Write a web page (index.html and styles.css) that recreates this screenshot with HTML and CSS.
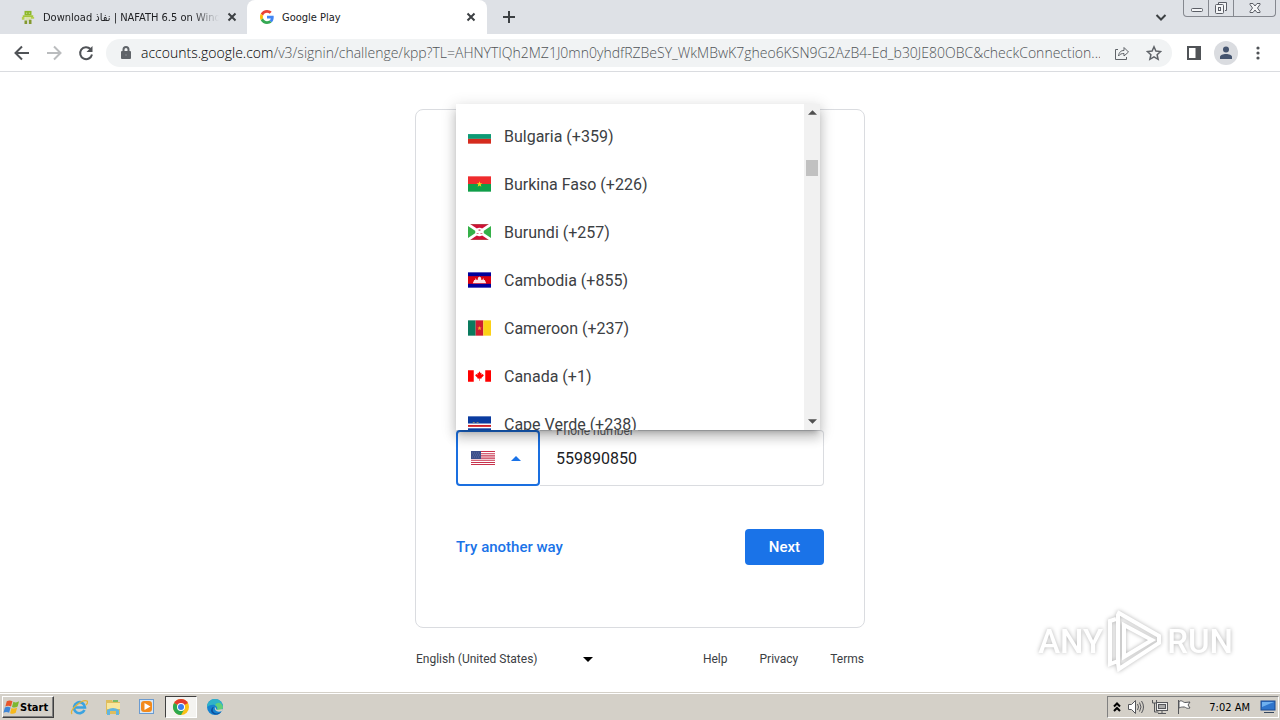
FILE: index.html
```html
<!DOCTYPE html>
<html lang="en">
<head>
    <meta charset="UTF-8">
    <meta name="viewport" content="width=device-width, initial-scale=1.0">
    <title>Google Play</title>
    <link rel="stylesheet" href="styles.css">
</head>
<body>
    <header class="browser">
        <div class="tab-strip">
            <div class="tab">
                <svg class="favicon" viewBox="0 0 16 16">
                    <path d="M4 1h8v5H4z" fill="#8cb82b" />
                    <path d="M2 6h12v2H2z" fill="#a4c639" />
                    <path d="M1 8h3v3H1zM11 8h4v2h-4z" fill="#b5cf4c" />
                    <path d="M5 8h6v4H5z" fill="#d9e3a8" />
                    <path d="M4 12h3v4H4zM9 11h3v5H9z" fill="#83992f" />
                    <path d="M6 3h1v1H6zM9 3h1v1H9z" fill="#fff" />
                </svg>
                <span class="tab-title tab-title-faded">Download نفاذ | NAFATH 6.5 on Windows</span>
                <button class="tab-close" aria-label="Close tab">
                    <svg viewBox="0 0 10 10"><path d="M1.500 1.500l7 7M8.500 1.500l-7 7" /></svg>
                </button>
            </div>
            <div class="tab active">
                <svg class="favicon" viewBox="0 0 48 48">
                    <path fill="#EA4335" d="M24 9.500c3.540 0 6.710 1.220 9.210 3.600l6.850-6.850C35.900 2.380 30.470 0 24 0 14.620 0 6.510 5.380 2.560 13.220l7.980 6.190C12.430 13.720 17.740 9.500 24 9.500z" />
                    <path fill="#4285F4" d="M46.980 24.550c0-1.570-.15-3.090-.38-4.550H24v9.020h12.940c-.58 2.960-2.260 5.480-4.780 7.180l7.730 6c4.510-4.180 7.090-10.360 7.090-17.650z" />
                    <path fill="#FBBC05" d="M10.530 28.590c-.48-1.450-.76-2.990-.76-4.590s.27-3.140.76-4.590l-7.980-6.190C.92 16.460 0 20.120 0 24c0 3.880.92 7.540 2.560 10.780l7.970-6.190z" />
                    <path fill="#34A853" d="M24 48c6.480 0 11.930-2.130 15.890-5.810l-7.730-6c-2.150 1.450-4.920 2.300-8.160 2.300-6.260 0-11.570-4.220-13.470-9.910l-7.980 6.190C6.510 42.620 14.620 48 24 48z" />
                </svg>
                <span class="tab-title">Google Play</span>
                <button class="tab-close" aria-label="Close tab">
                    <svg viewBox="0 0 10 10"><path d="M1.500 1.500l7 7M8.500 1.500l-7 7" /></svg>
                </button>
            </div>
            <button class="new-tab" aria-label="New tab">
                <svg viewBox="0 0 12 12"><path d="M6 0v12M0 6h12" /></svg>
            </button>
            <button class="tab-search" aria-label="Search tabs">
                <svg viewBox="0 0 12 12"><path d="M1.500 4L6 8.500 10.500 4" /></svg>
            </button>
            <div class="window-controls">
                <button aria-label="Minimize">
                    <svg viewBox="0 0 26 16"><rect x="7.500" y="8.500" width="11" height="3" rx="1" /></svg>
                </button>
                <button aria-label="Restore">
                    <svg viewBox="0 0 26 16"><path d="M9.500 4V2.500h8v8H16" /><rect x="6.500" y="4.500" width="8" height="9" rx="1" /><rect x="9.500" y="7.500" width="2" height="3" /></svg>
                </button>
                <button class="close" aria-label="Close">
                    <svg viewBox="0 0 26 16"><path d="M8 3.500h3l2 2.500 2-2.500h3v1L15.500 8l2.500 3.500v1h-3L13 10l-2 2.500H8v-1L10.500 8 8 4.500z" /></svg>
                </button>
            </div>
        </div>

        <div class="toolbar">
            <button class="tool" aria-label="Back">
                <svg viewBox="0 0 16 16"><path d="M15 8H2M8 1.500L1.500 8 8 14.500" /></svg>
            </button>
            <button class="tool disabled" aria-label="Forward">
                <svg viewBox="0 0 16 16"><path d="M1 8h13M8 1.500L14.500 8 8 14.500" /></svg>
            </button>
            <button class="tool" aria-label="Reload">
                <svg viewBox="0 0 16 16"><path d="M14 9.500A6 6 0 1 1 12.500 4" /><path class="solid" d="M14.500 1v6h-6z" /></svg>
            </button>
            <div class="omnibox">
                <svg class="lock" viewBox="0 0 10 14"><path d="M2.500 6V3.500a2.500 2.500 0 0 1 5 0V6" /><rect x="0" y="5" width="10" height="8" rx="1" /><circle cx="5" cy="9" r="1" /></svg>
                <div class="url" role="textbox" aria-label="Address"><span>accounts.google.com</span>/v3/signin/challenge/kpp?TL=AHNYTIQh2MZ1J0mn0yhdfRZBeSY_WkMBwK7gheo6KSN9G2AzB4-Ed_b30JE80OBC&amp;checkConnection...</div>
                <button class="omni-button" aria-label="Share">
                    <svg viewBox="0 0 16 16"><path d="M4 4.500H1.500v10h11V12M4.500 11c.5-4 2.500-5.500 5.500-5.500v-3L14.500 7 10 11V8.500c-2.500 0-4 .5-5.500 2.500z" /></svg>
                </button>
                <button class="omni-button" aria-label="Bookmark">
                    <svg viewBox="0 0 16 16"><path class="star" d="M8 1.800l1.900 4.300 4.700.5-3.500 3.100 1 4.600L8 11.900l-4.100 2.400 1-4.600-3.500-3.100 4.700-.5z" /></svg>
                </button>
            </div>
            <button class="tool" aria-label="Side panel">
                <svg viewBox="0 0 16 16"><rect x="2" y="2" width="12" height="12" /><path class="solid" d="M9.500 2H14v12H9.500z" /></svg>
            </button>
            <button class="tool profile" aria-label="Profile">
                <svg viewBox="0 0 22 22"><circle cx="11" cy="7.500" r="3" /><path d="M5 17v-2c0-4 12-4 12 0v2z" /></svg>
            </button>
            <button class="tool" aria-label="Menu">
                <svg viewBox="0 0 16 16"><circle class="dot" cx="8" cy="3" r="1.600" /><circle class="dot" cx="8" cy="8" r="1.600" /><circle class="dot" cx="8" cy="13" r="1.600" /></svg>
            </button>
        </div>
    </header>

    <main class="page">
        <form class="card">
            <div class="phone-row">
                <button type="button" class="country-button" aria-haspopup="listbox" aria-label="United States (+1)">
                    <svg class="flag-us" viewBox="0 0 24 14">
                        <rect width="24" height="14" fill="#fff" />
                        <path d="M0 .5h24M0 2.700h24M0 4.900h24M0 7.100h24M0 9.300h24M0 11.500h24M0 13.500h24" stroke="#c8324c" stroke-width="1.100" />
                        <rect width="10" height="8" fill="#3c4f8a" />
                        <path d="M1 2h8M2 4h7M1 6h8" stroke="#7785b0" stroke-width=".6" stroke-dasharray="1 1" />
                    </svg>
                    <svg class="caret" viewBox="0 0 10 5"><path d="M0 5l5-5 5 5z" /></svg>
                </button>
                <div class="phone-field">
                    <label for="phone">Phone number</label>
                    <input type="tel" id="phone" value="559890850">
                </div>

                <div class="menu">
                    <ul class="menu-list" role="listbox" aria-label="Country">
                        <li role="option">
                            <svg class="flag" viewBox="0 0 24 16"><path d="M0 0h24v6H0z" fill="#fff" /><path d="M0 6h24v5H0z" fill="#0c9b75" /><path d="M0 11h24v5H0z" fill="#d52b1e" /></svg>
                            Bulgaria (+359)
                        </li>
                        <li role="option">
                            <svg class="flag" viewBox="0 0 24 16"><path d="M0 0h24v8H0z" fill="#ef2b2d" /><path d="M0 8h24v8H0z" fill="#109e49" /><path d="M12 5l.8 2.200H15l-1.800 1.400.7 2.200-1.900-1.300-1.900 1.300.7-2.200L9 7.200h2.200z" fill="#fcd116" /></svg>
                            Burkina Faso (+226)
                        </li>
                        <li role="option">
                            <svg class="flag" viewBox="0 0 24 16"><path d="M0 0h24v16H0z" fill="#35b048" /><path d="M0 0h24L12 8l12 8H0l12-8z" fill="#cf1136" /><path d="M0 0l24 16M24 0L0 16" stroke="#fff" stroke-width="3" /><circle cx="12" cy="8" r="4.500" fill="#fff" /><path d="M11 5h2v2h-2zM9 9h2v1H9zM13 9h2v1h-2z" fill="#d9788a" /></svg>
                            Burundi (+257)
                        </li>
                        <li role="option">
                            <svg class="flag" viewBox="0 0 24 16"><path d="M0 0h24v16H0z" fill="#00009c" /><path d="M0 4h24v8H0z" fill="#d90010" /><path d="M5 11.500L6.500 8h1l.5-2 1 2h1l.5-3h1l.5-1 .5 1h1l.5 3h1l1-2 .5 2h1l1.500 3.500z" fill="#fff" opacity=".9" /></svg>
                            Cambodia (+855)
                        </li>
                        <li role="option">
                            <svg class="flag" viewBox="0 0 24 16"><path d="M0 0h8v16H0z" fill="#0a7a5e" /><path d="M8 0h8v16H8z" fill="#ce1b30" /><path d="M16 0h8v16h-8z" fill="#fcd116" /><path d="M12 6l.6 1.500h1.600L13 8.500l.5 1.700-1.500-1-1.500 1 .5-1.700-1.200-1h1.600z" fill="#f6a52a" /></svg>
                            Cameroon (+237)
                        </li>
                        <li role="option">
                            <svg class="flag" viewBox="0 0 24 16"><path d="M0 2h24v12H0z" fill="#fff" /><path d="M0 2h6v12H0zM18 2h6v12h-6z" fill="#f00" /><path d="M12 3l1.200 2 1-.4-.3 2.200L15.500 6l1 1.500-2.600 2.500.2.900-1.800-.2V13h-.6v-2.300l-1.800.2.200-.9-2.600-2.500 1-1.500 1.600.8-.3-2.200 1 .4z" fill="#f00" /></svg>
                            Canada (+1)
                        </li>
                        <li role="option">
                            <svg class="flag" viewBox="0 0 24 16"><path d="M0 0h24v16H0z" fill="#0a3ba0" /><path d="M0 7.500h24v5H0z" fill="#fff" /><path d="M0 9h24v2H0z" fill="#cf2027" /><path d="M5 6.500h2M9 6.500h2" stroke="#c9b458" stroke-width=".7" /></svg>
                            Cape Verde (+238)
                        </li>
                    </ul>
                    <div class="scrollbar" aria-hidden="true">
                        <svg viewBox="0 0 10 5"><path d="M0 5l5-5 5 5z" /></svg>
                        <div class="scroll-track"><div class="scroll-thumb"></div></div>
                        <svg viewBox="0 0 10 5"><path d="M0 0l5 5 5-5z" /></svg>
                    </div>
                </div>
            </div>

            <div class="actions">
                <a href="#">Try another way</a>
                <button type="button" class="next">Next</button>
            </div>
        </form>

        <footer class="page-footer">
            <div class="language">
                <select aria-label="Language">
                    <option>English (United States)</option>
                </select>
                <svg viewBox="0 0 10 5"><path d="M0 0l5 5 5-5z" /></svg>
            </div>
            <nav>
                <a href="#">Help</a>
                <a href="#">Privacy</a>
                <a href="#">Terms</a>
            </nav>
        </footer>
    </main>

    <div class="watermark">
        <span>ANY</span>
        <svg viewBox="0 0 56 62">
            <path d="M9 9L3 11v43l8-3M12 3l40 23v7L12 59l-1-6V5zM17 15v32l28-17z" />
        </svg>
        <span>RUN</span>
    </div>

    <div class="taskbar">
        <button class="start">
            <svg viewBox="0 0 18 16">
                <path d="M4 2q3-2 6 0L8.500 7.500q-3-1.500-6 0z" fill="#e8562a" />
                <path d="M11 2.500q3 1.500 6-.5l-1.500 5.500q-3 2-6 .5z" fill="#7db72f" />
                <path d="M2 8.500q3-1.500 6 0L6.500 14q-3-1.500-6 0z" fill="#3f86d6" />
                <path d="M9 9q3 1.500 6-.5L13.500 14q-3 2-6 .5z" fill="#f6b91c" />
            </svg>
            Start
        </button>
        <div class="quick-launch">
            <button aria-label="Internet Explorer">
                <svg viewBox="0 0 18 18">
                    <path d="M14.500 12A5.500 5.500 0 1 1 15 9.500H5" fill="none" stroke="#3ba3e0" stroke-width="2.600" />
                    <path d="M2 16C-1 12 12 1 17 3c1 1 0 3-1 4" fill="none" stroke="#e3b437" stroke-width="1.300" />
                </svg>
            </button>
            <button aria-label="Explorer">
                <svg viewBox="0 0 18 18">
                    <path d="M2 2h6l1 2h7v12H2z" fill="#dfbd5c" />
                    <path d="M3 5h13v6H3z" fill="#f8e69c" />
                    <path d="M3 17v-5q6-4 12 0v5h-3v-4H6v4z" fill="#62b5df" />
                    <path d="M9 2h5v2H9z" fill="#77bb67" />
                </svg>
            </button>
            <button aria-label="Media Player">
                <svg viewBox="0 0 18 18">
                    <rect x="1.500" y="1.500" width="14" height="14" fill="#d7e8f8" stroke="#6b9bd0" />
                    <rect x="3" y="3" width="11" height="11" rx="3" fill="#f28a1c" />
                    <path d="M6.500 5l6 3.500-6 3.500z" fill="#fff" />
                </svg>
            </button>
            <button class="pressed" aria-label="Chrome">
                <svg viewBox="0 0 18 18">
                    <circle cx="9" cy="9" r="8" fill="#fbc116" />
                    <path d="M9 9L2.070 5A8 8 0 0 1 15.930 5z" fill="#e33b2e" />
                    <path d="M9 9L2.070 5A8 8 0 0 0 9 17l3.500-6z" fill="#2da94f" />
                    <circle cx="9" cy="9" r="4" fill="#fff" />
                    <circle cx="9" cy="9" r="3" fill="#3b7ded" />
                </svg>
            </button>
            <button aria-label="Edge">
                <svg viewBox="0 0 18 18">
                    <circle cx="9" cy="9" r="8" fill="#1683d0" />
                    <path d="M1 9a8 8 0 0 1 16 0c0 3-4 4-6 3 2-4-4-8-10-3z" fill="#2fb3c8" />
                    <path d="M17 9c0 3-4 4-6 3 1-2 0-4-2-5 3-4 7-2 8 2z" fill="#61cf7a" />
                    <path d="M8 9c-3 3 0 8 5 6l2-1c-3 4-9 3-10-1 0-2 1-4 3-4z" fill="#0d4f9e" />
                    <path d="M9 9c-1 3 2 6 7 4l1-2-6 1c-1-1-1-2-2-3z" fill="#d4d0c8" />
                </svg>
            </button>
        </div>
        <div class="tray">
            <svg class="chevrons" viewBox="0 0 8 10"><path d="M1 4.500l3-3 3 3M1 9l3-3 3 3" /></svg>
            <svg viewBox="0 0 18 16"><path d="M1.500 5.500h3l4-4v13l-4-4h-3z" fill="#fff" /><path d="M10.500 5q2 3 0 6M12.500 3.500q3 4.500 0 9M14.500 2q4 6 0 12" /></svg>
            <svg viewBox="0 0 18 16"><rect x="5.500" y="3.500" width="11" height="8" fill="#eee" /><path d="M7 14.500h8M11 12v2M1.500 1v3h4V1M3.500 4v9h4" /><rect x="7.500" y="5.500" width="7" height="4" fill="#aaa" /></svg>
            <svg viewBox="0 0 18 16"><path d="M3.500 1v14" /><path d="M4 2.500c3-2 4 1 6 1l5-.5-2 3 2 3c-4 1-4-1-6-1s-3 0-5 1z" fill="#fff" /></svg>
            <time>7:02 AM</time>
            <svg class="desktop" viewBox="0 0 16 16"><rect x="1" y="2" width="14" height="9" fill="#2f75cc" stroke="#1c4b91" /><path d="M2 3h12L2 8z" fill="#6fb0ef" stroke="none" /><path d="M4 13.500h10" stroke="#34465e" /></svg>
        </div>
    </div>
</body>
</html>
```
FILE: styles.css
```css
* {
    box-sizing: border-box;
}
body {
    margin: 0;
    min-height: 100vh;
    display: flex;
    flex-direction: column;
    position: relative;
    font-family: Roboto, Arial, sans-serif;
    color: #202124;
    background-color: #fff;
}
button {
    padding: 0;
    border: none;
    background: none;
    font-family: inherit;
    color: inherit;
    cursor: pointer;
}
svg {
    display: block;
    flex: none;
}
a {
    text-decoration: none;
}

/* browser window */
.tab-strip {
    display: flex;
    align-items: center;
    height: 34px;
    background-color: #dee1e6;
    font-family: "DejaVu Sans Condensed", Tahoma, sans-serif;
    font-size: 11px;
}
.tab {
    display: flex;
    align-items: center;
    gap: 8px;
    width: 240px;
    height: 34px;
    padding: 0 11px 0 13px;
}
.tab:first-child {
    width: 247px;
    padding: 0 10px 0 21px;
}
.tab.active {
    background-color: #fff;
    border-radius: 8px 8px 0 0;
}
.favicon {
    width: 14px;
    height: 14px;
}
.tab-title {
    flex: 1;
    overflow: hidden;
    white-space: nowrap;
}
.tab-title-faded {
    -webkit-mask-image: linear-gradient(to right, #000 85%, transparent);
    mask-image: linear-gradient(to right, #000 85%, transparent);
}
.tab-close svg {
    width: 10px;
    height: 10px;
}
.tab-close svg, .new-tab svg, .tab-search svg {
    fill: none;
    stroke: #3c4043;
    stroke-width: 2;
}
.new-tab {
    margin-left: 16px;
}
.new-tab svg, .tab-search svg {
    width: 12px;
    height: 12px;
}
.tab-search {
    margin-left: auto;
}
.window-controls {
    display: flex;
    align-self: flex-start;
    height: 17px;
    margin: 0 4px 0 16px;
    border: 1px solid #85888f;
    border-top: none;
    border-radius: 0 0 4px 4px;
}
.window-controls button {
    width: 25px;
    border-right: 1px solid #85888f;
}
.window-controls .close {
    width: 41px;
    border-right: none;
}
.window-controls svg {
    width: 26px;
    height: 16px;
    margin: 0 auto;
    fill: #f4f5f7;
    stroke: #5b5e66;
}
.toolbar {
    display: flex;
    align-items: center;
    gap: 8px;
    height: 38px;
    padding: 0 10px;
    border-bottom: 1px solid #dadce0;
}
.tool {
    display: flex;
    align-items: center;
    justify-content: center;
    width: 24px;
    height: 24px;
}
.tool svg {
    width: 16px;
    height: 16px;
    fill: none;
    stroke: #505357;
    stroke-width: 2;
}
.tool .solid, .tool .dot {
    fill: #505357;
    stroke: none;
}
.tool.disabled svg {
    stroke: #babcbe;
}
.profile {
    border-radius: 50%;
    background-color: #dadce0;
}
.profile svg {
    width: 22px;
    height: 22px;
    fill: #44546f;
    stroke: none;
}
.omnibox {
    flex: 1;
    display: flex;
    align-items: center;
    min-width: 0;
    height: 28px;
    margin-right: 2px;
    padding: 0 10px 0 15px;
    border-radius: 14px;
    background-color: #f1f3f4;
}
.lock {
    width: 10px;
    height: 14px;
    margin-right: 10px;
    fill: #5f6368;
}
.lock path {
    fill: none;
    stroke: #5f6368;
    stroke-width: 2;
}
.lock circle {
    fill: #777b80;
}
.url {
    flex: 1;
    overflow: hidden;
    white-space: nowrap;
    font-family: "Open Sans", Tahoma, sans-serif;
    font-size: 14px;
    font-weight: 300;
    color: #505357;
}
.url span {
    color: #000;
}
.omni-button {
    margin-left: 14px;
}
.omni-button + .omni-button {
    margin-left: 16px;
}
.omni-button svg {
    width: 16px;
    height: 16px;
    fill: none;
    stroke: #5f6368;
}
.omni-button .star {
    stroke-width: 1.5;
}

/* sign-in page */
.page {
    flex: 1;
    padding-top: 37px;
}
.card {
    display: flex;
    flex-direction: column;
    justify-content: flex-end;
    max-width: 450px;
    min-height: 519px;
    margin: 0 auto;
    padding: 0 40px 62px;
    border: 1px solid #dadce0;
    border-radius: 8px;
}
.phone-row {
    display: flex;
    position: relative;
    height: 56px;
}
.country-button {
    display: flex;
    align-items: center;
    gap: 16px;
    width: 84px;
    padding-left: 13px;
    border: 2px solid #1a6fe0;
    border-radius: 4px;
}
.flag-us {
    width: 24px;
    height: 14px;
}
.caret {
    width: 10px;
    height: 5px;
    fill: #1a73e8;
}
.phone-field {
    flex: 1;
    position: relative;
}
.phone-field label {
    position: absolute;
    top: -7px;
    left: 12px;
    padding: 0 4px;
    background-color: #fff;
    font-size: 12px;
    line-height: 16px;
    color: #5f6368;
}
.phone-field input {
    width: 100%;
    height: 56px;
    padding: 0 16px;
    border: 1px solid #dadce0;
    border-left: none;
    border-radius: 0 4px 4px 0;
    outline: none;
    font-family: inherit;
    font-size: 16px;
    color: #202124;
}
.menu {
    display: flex;
    position: absolute;
    bottom: 100%;
    left: 0;
    right: 4px;
    height: 326px;
    background-color: #fff;
    box-shadow: 0 5px 5px -3px rgba(0, 0, 0, 0.2), 0 8px 10px 1px rgba(0, 0, 0, 0.14), 0 3px 14px 2px rgba(0, 0, 0, 0.12);
}
.menu-list {
    flex: 1;
    margin: 0;
    padding: 8px 0;
    overflow: hidden;
    list-style-type: none;
}
.menu-list li {
    display: flex;
    align-items: center;
    gap: 13px;
    height: 48px;
    padding-left: 12px;
    font-size: 16px;
    color: #3c4043;
}
.flag {
    width: 23px;
    height: 16px;
}
.scrollbar {
    display: flex;
    flex-direction: column;
    align-items: center;
    width: 16px;
    padding: 6px 0;
    background-color: #f1f1f1;
}
.scrollbar svg {
    width: 9px;
    height: 5px;
    fill: #505050;
}
.scroll-track {
    flex: 1;
    padding-top: 45px;
}
.scroll-thumb {
    width: 12px;
    height: 16px;
    background-color: #c1c1c1;
}
.actions {
    display: flex;
    align-items: center;
    justify-content: space-between;
    margin-top: 43px;
    font-size: 15px;
    font-weight: 500;
}
.actions a {
    color: #1a73e8;
}
.next {
    height: 36px;
    padding: 0 24px;
    border-radius: 4px;
    background-color: #1a73e8;
    color: #fff;
    font-size: 15px;
    font-weight: 500;
}
.page-footer {
    display: flex;
    align-items: center;
    justify-content: space-between;
    max-width: 448px;
    margin: 0 auto;
    padding: 22px 0 24px;
    font-size: 12px;
    line-height: 18px;
}
.language {
    display: flex;
    align-items: center;
}
.language select {
    width: 167px;
    padding: 0;
    border: none;
    background: none;
    appearance: none;
    font: inherit;
    color: #3c4043;
}
.language svg {
    width: 10px;
    height: 5px;
}
.page-footer nav {
    display: flex;
    gap: 32px;
}
.page-footer a {
    color: #3c4043;
}

/* recording watermark */
.watermark {
    display: flex;
    align-items: center;
    gap: 4px;
    position: absolute;
    right: 47px;
    bottom: 48px;
    font-family: Roboto, Arial, sans-serif;
    font-size: 33px;
    font-weight: 500;
    color: #fff;
    filter: drop-shadow(0 0 2px rgba(0, 0, 0, 0.3));
}
.watermark svg {
    width: 56px;
    height: 62px;
    fill: none;
    stroke: #fff;
    stroke-width: 4;
}

/* taskbar */
.taskbar {
    display: flex;
    align-items: center;
    height: 28px;
    padding: 1px 1px 0 2px;
    border-top: 1px solid #d4d0c8;
    background-color: #d4d0c8;
    box-shadow: inset 0 1px 0 #fff;
    font-family: "DejaVu Sans Condensed", Tahoma, sans-serif;
    font-size: 11px;
    color: #000;
}
.start {
    display: flex;
    align-items: center;
    width: 52px;
    height: 22px;
    border: 1px solid #404040;
    border-top-color: #fff;
    border-left-color: #fff;
    box-shadow: inset -1px -1px 0 #808080;
    font-size: 11px;
    font-weight: bold;
}
.start svg {
    width: 17px;
    height: 16px;
}
.quick-launch {
    display: flex;
    gap: 2px;
    margin-left: 9px;
}
.quick-launch button {
    width: 32px;
    height: 22px;
}
.quick-launch svg {
    width: 18px;
    height: 18px;
    margin: 0 auto;
}
.quick-launch .pressed {
    border: 1px solid #fff;
    border-top-color: #404040;
    border-left-color: #404040;
    background-color: #f4f3f0;
}
.tray {
    display: flex;
    align-items: center;
    gap: 6px;
    height: 22px;
    margin-left: auto;
    padding: 0 2px 0 5px;
    border: 1px solid #fff;
    border-top-color: #808080;
    border-left-color: #808080;
}
.tray svg {
    width: 18px;
    height: 16px;
    fill: none;
    stroke: #55565a;
}
.tray .chevrons {
    width: 8px;
    height: 10px;
    stroke: #000;
    stroke-width: 2;
}
.tray .desktop {
    width: 16px;
}
.tray time {
    margin: 0 4px 0 10px;
}
```
